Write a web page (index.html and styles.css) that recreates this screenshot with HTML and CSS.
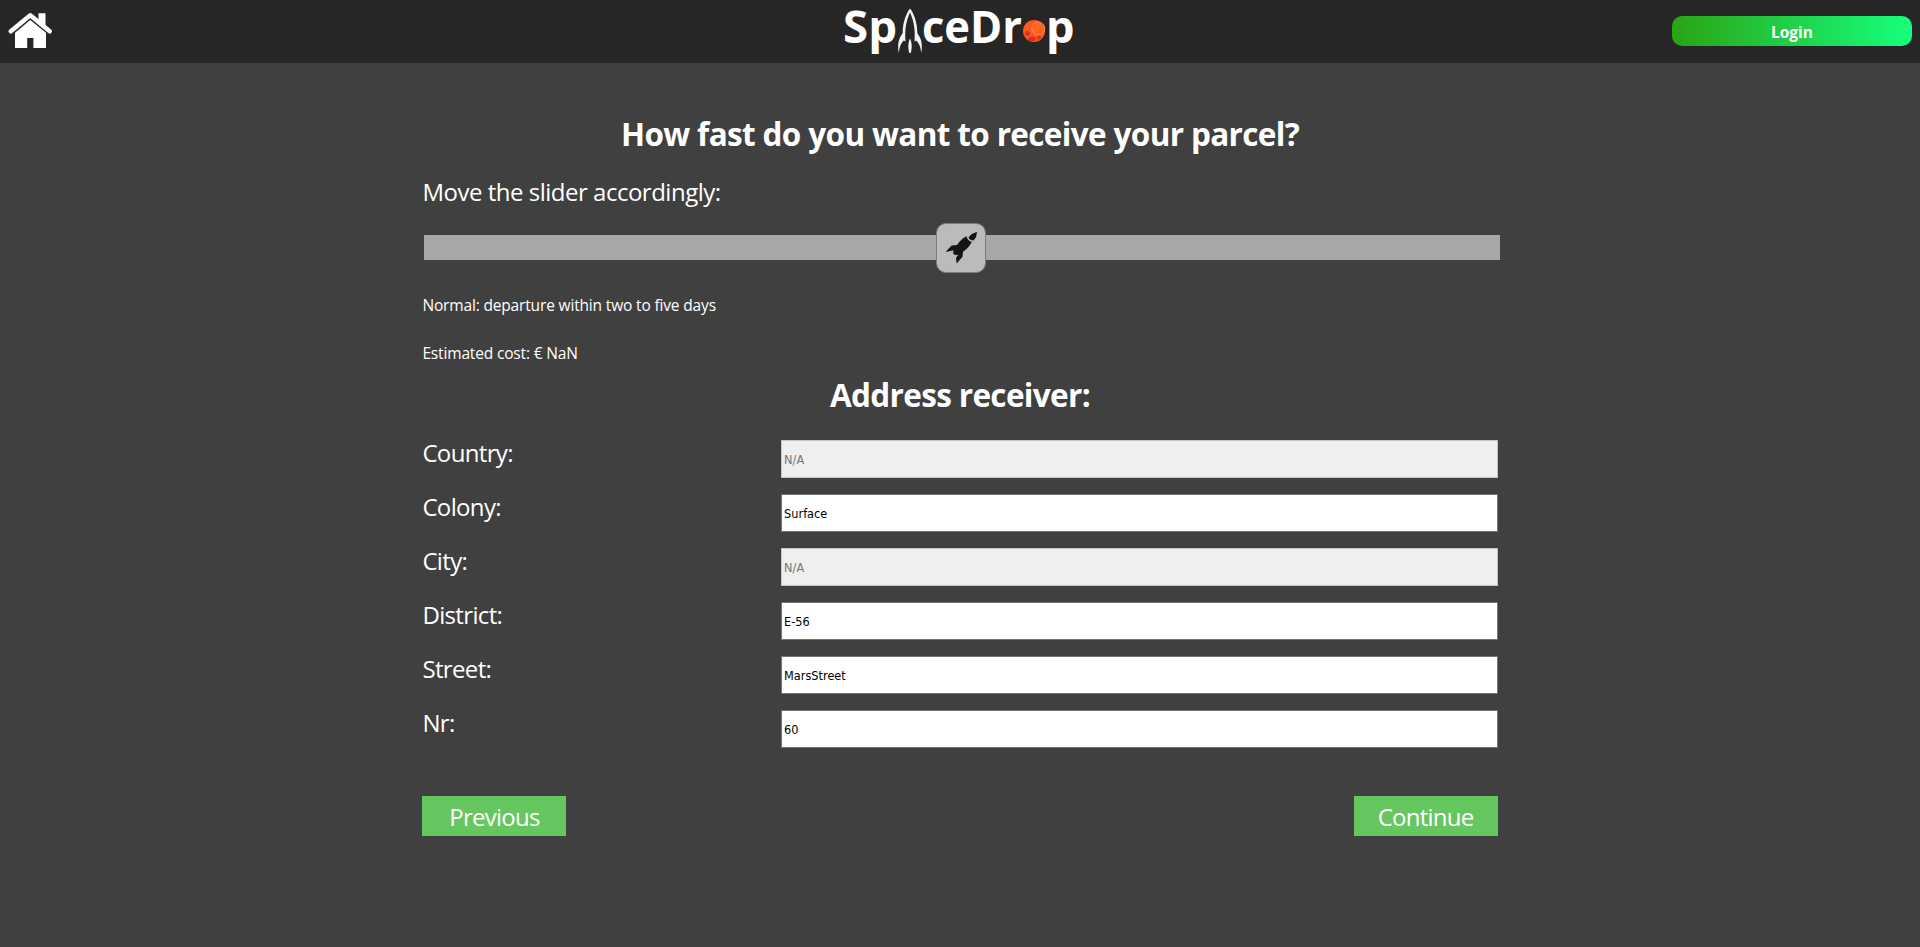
FILE: index.html
```html
<!DOCTYPE html>
<html lang="en">
<head>
<meta charset="utf-8">
<title>SpaceDrop</title>
<link rel="stylesheet" href="styles.css">
</head>
<body>
<header class="topbar">
  <a class="home" aria-label="Home">
    <svg width="46" height="39" viewBox="0 0 46 39">
      <path fill="#fff" d="M30.500 11V1.200h7v16z"/>
      <path fill="#fff" d="M7 20.800 22.300 8 38 20.800V36H25.400V26h-6.200v10H7z"/>
      <path fill="none" stroke="#fff" stroke-width="4.400" stroke-linecap="round" stroke-linejoin="round" d="M2.800 19.300 22.300 3.200 41.700 19.300"/>
    </svg>
  </a>
  <svg class="logo" width="240" height="60" viewBox="840 0 240 60" role="img" aria-label="SpaceDrop">
    <g class="logo-text">
      <text x="843" y="42.500" textLength="54" lengthAdjust="spacingAndGlyphs">Sp</text>
      <text x="922" y="42.500" textLength="100" lengthAdjust="spacingAndGlyphs">ceDr</text>
      <text x="1046" y="42.500" textLength="28.500" lengthAdjust="spacingAndGlyphs">p</text>
    </g>
    <g fill="#f2f2f2">
      <path d="M910 8.500c-4 5-7.500 15-7.300 24.500l-2.700 4.500c-2 4-2.300 9-1.300 15.500.8-5.500 1.800-9.500 5-12.500l1.800 1c-.8-11 .3-20 4.500-29 4.200 9 5.300 18 4.500 29l1.800-1c3.200 3 4.200 7 5 12.500 1-6.500.7-11.500-1.300-15.500l-2.700-4.500c.2-9.500-3.300-19.500-7.300-24.500z"/>
      <path d="M910 38.500c-1.800 4-2.300 8-.8 14.500h1.600c1.500-6.500 1-10.500-.8-14.500z"/>
    </g>
    <circle cx="1034" cy="31" r="11" fill="#fb591c"/>
    <circle cx="1038.300" cy="28.500" r="6.500" fill="#ff6420" stroke="#ff9a68" stroke-width=".7"/>
    <g fill="#d92f2c"><circle cx="1027.500" cy="33.500" r="2.500"/><ellipse cx="1032" cy="38.700" rx="3.800" ry="2.300"/><circle cx="1039" cy="37.500" r="1.900"/></g>
  </svg>
  <button class="login" type="button">Login</button>
</header>

<main class="page">
  <h1 class="title title-speed">How fast do you want to receive your parcel?</h1>
  <p class="lead">Move the slider accordingly:</p>
  <div class="slider">
    <div class="track"></div>
    <div class="thumb">
      <svg width="34" height="34" viewBox="0 0 34 34" fill="#141414">
        <path d="M32 .8 26.500 3.200 23.500 6.500c.9 1.800 2.600 3 5 3L31 6.200z"/>
        <path d="M21.500 5.300C18 7 14.500 10 12 14l-5.500.5L.5 21l6-1.300 2-.2-.3 3.300 2 1.200 3-.2L11 27l.7 5.500 5.800-6.700.5-5c3.800-2.600 6.700-5.800 8.800-9.800-2.600-.6-4.600-2.500-5.300-5.700z"/>
      </svg>
    </div>
  </div>
  <p class="note">Normal: departure within two to five days</p>
  <p class="note cost">Estimated cost: € NaN</p>

  <h2 class="title title-address">Address receiver:</h2>
  <form class="address">
    <label for="country">Country:</label><input id="country" type="text" placeholder="N/A" disabled>
    <label for="colony">Colony:</label><input id="colony" type="text" value="Surface">
    <label for="city">City:</label><input id="city" type="text" placeholder="N/A" disabled>
    <label for="district">District:</label><input id="district" type="text" value="E-56">
    <label for="street">Street:</label><input id="street" type="text" value="MarsStreet">
    <label for="nr">Nr:</label><input id="nr" type="text" value="60">
  </form>
  <div class="actions">
    <button class="btn" type="button">Previous</button>
    <button class="btn" type="button">Continue</button>
  </div>
</main>
</body>
</html>
```
FILE: styles.css
```css
* { box-sizing: border-box; }

body {
  margin: 0;
  min-height: 947px;
  background: #404040;
  color: #fff;
  font-family: "Segoe UI", "Open Sans", "Noto Sans", sans-serif;
  font-size: 16px;
}

.topbar {
  display: grid;
  grid-template-columns: 1fr 240px 1fr;
  align-items: center;
  height: 63px;
  padding: 0 8px;
  background: #262626;
}

.home { display: block; width: 46px; height: 39px; }
.home svg, .logo, .thumb svg { display: block; }
.logo { align-self: start; overflow: visible; }
.logo-text { fill: #fff; font-size: 45px; font-weight: 700; }

.login {
  justify-self: end;
  width: 240px;
  height: 30px;
  margin-bottom: 1px;
  padding: 2px 0 0;
  border: 0;
  border-radius: 10px;
  background: linear-gradient(to right, #2aa314, #15ff7c);
  color: #fff;
  font: 700 15.500px/28px "Segoe UI", "Open Sans", sans-serif;
}

.page { width: 56%; margin: 0 auto; padding-top: 49px; }

.title {
  margin: 0;
  font-size: 31.500px;
  line-height: 44px;
  font-weight: 700;
  letter-spacing: -0.65px;
  text-align: center;
  white-space: nowrap;
}

.lead { margin: 20px 0 0; font-size: 24px; line-height: 32px; letter-spacing: -0.49px; }

.slider { position: relative; margin: 15px 0 0 2px; width: 1076px; height: 50px; padding-top: 12px; }
.track { height: 25px; background: #a7a7a7; }
.thumb {
  position: absolute;
  top: 0;
  left: 512px;
  width: 50px;
  height: 50px;
  padding: 7px 0 0 8px;
  border: 1px solid #7d7d7d;
  border-radius: 10px;
  background: #bbb;
}

.note { margin: 21px 0 0; font-size: 15.500px; line-height: 22px; letter-spacing: -0.16px; }
.cost { margin-top: 26px; }

.title-address { margin-top: 9px; }

.address {
  display: grid;
  grid-template-columns: 1fr 717px;
  grid-auto-rows: 38px;
  row-gap: 16px;
  margin-top: 23px;
}
.address label { font-size: 24px; line-height: 25px; letter-spacing: -0.65px; }
.address input {
  width: 717px;
  height: 38px;
  padding: 1px 2.500px;
  border: 1px solid #767676;
  border-radius: 0;
  background: #fff;
  color: #000;
  font: 12.600px "DejaVu Sans Condensed", "DejaVu Sans", sans-serif;
}
.address input:disabled { background: #efefef; border-color: #c4c4c4; }
.address input::placeholder { color: #757575; }

.actions { display: flex; justify-content: space-between; margin-top: 48px; }
.btn {
  width: 144px;
  height: 40px;
  padding: 2px 0 0;
  border: 0;
  background: #66c760;
  color: #fff;
  font: 24px/38px "Segoe UI", "Open Sans", sans-serif;
  letter-spacing: -0.75px;
}
```
